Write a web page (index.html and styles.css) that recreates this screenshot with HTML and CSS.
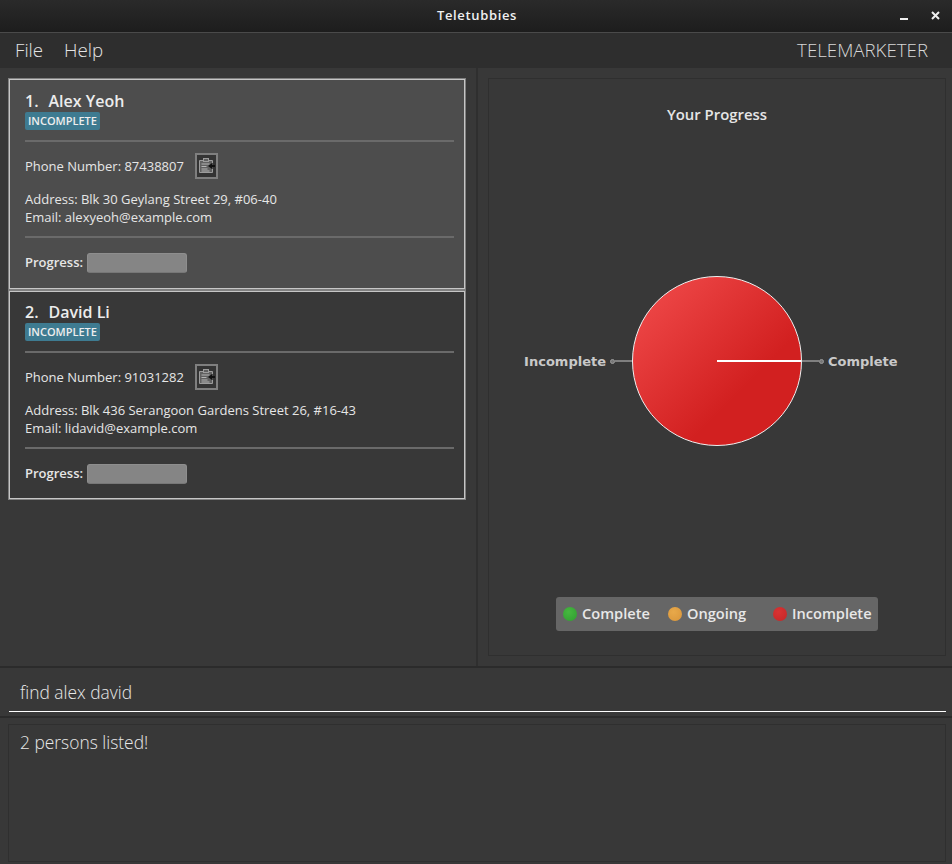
FILE: index.html
```html
<!DOCTYPE html>
<html lang="en">
<head>
    <meta charset="UTF-8">
    <title>Teletubbies</title>
    <link rel="stylesheet" href="styles.css">
</head>
<body>
    <div class="titlebar">
        <span class="title">Teletubbies</span>
        <svg class="winbtns" width="42" height="12" viewBox="0 0 42 12">
            <rect x="1" y="9" width="8" height="2" fill="#eee"/>
            <path d="M33 3l7 7M40 3l-7 7" stroke="#eee" stroke-width="2"/>
        </svg>
    </div>
    <div class="menubar">
        <span class="menu">File</span>
        <span class="menu">Help</span>
        <span class="brand">TELEMARKETER</span>
    </div>
    <div class="main">
        <div class="left">
            <div class="card selected">
                <div class="name"><span class="num">1.</span>Alex Yeoh</div>
                <div class="tag">INCOMPLETE</div>
                <div class="rule"></div>
                <div class="phone">
                    <span>Phone Number: 87438807</span>
                    <span class="copy">
                        <svg width="17" height="18" viewBox="0 0 17 18" fill="none" stroke="#9c9c9c">
                            <path d="M14.5 6V3.5H1.5v12h13V12" fill="#606060"/>
                            <rect x="5.5" y="1.5" width="5" height="3" fill="#606060"/>
                            <path d="M3.5 7h8M3.5 9.5h5M3.5 12h6M3.5 14h8" stroke="#b4b4b4"/>
                            <path d="M17 9h-4" stroke="#111" stroke-width="2"/>
                            <path d="M14 6l-4 3 4 3z" fill="#111" stroke="none"/>
                        </svg>
                    </span>
                </div>
                <div class="line">Address: Blk 30 Geylang Street 29, #06-40</div>
                <div class="line">Email: alexyeoh@example.com</div>
                <div class="rule rule2"></div>
                <div class="progress"><b>Progress:</b><span class="bar"></span></div>
            </div>
            <div class="card">
                <div class="name"><span class="num">2.</span>David Li</div>
                <div class="tag">INCOMPLETE</div>
                <div class="rule"></div>
                <div class="phone">
                    <span>Phone Number: 91031282</span>
                    <span class="copy">
                        <svg width="17" height="18" viewBox="0 0 17 18" fill="none" stroke="#9c9c9c">
                            <path d="M14.5 6V3.5H1.5v12h13V12" fill="#606060"/>
                            <rect x="5.5" y="1.5" width="5" height="3" fill="#606060"/>
                            <path d="M3.5 7h8M3.5 9.5h5M3.5 12h6M3.5 14h8" stroke="#b4b4b4"/>
                            <path d="M17 9h-4" stroke="#111" stroke-width="2"/>
                            <path d="M14 6l-4 3 4 3z" fill="#111" stroke="none"/>
                        </svg>
                    </span>
                </div>
                <div class="line">Address: Blk 436 Serangoon Gardens Street 26, #16-43</div>
                <div class="line">Email: lidavid@example.com</div>
                <div class="rule rule2"></div>
                <div class="progress"><b>Progress:</b><span class="bar"></span></div>
            </div>
        </div>
        <div class="right">
            <div class="chartbox">
                <div class="charttitle">Your Progress</div>
                <div class="chart">
                    <div class="pielabel pielabel-left">
                        <span class="lbl">Incomplete</span>
                        <span class="dot"></span>
                        <span class="lead"></span>
                    </div>
                    <div class="pie"><span class="needle"></span></div>
                    <div class="pielabel">
                        <span class="lead"></span>
                        <span class="dot"></span>
                        <span class="lbl">Complete</span>
                    </div>
                </div>
                <div class="legend">
                    <span class="key key1"><i class="ball green"></i><span>Complete</span></span>
                    <span class="key key2"><i class="ball orange"></i><span>Ongoing</span></span>
                    <span class="key"><i class="ball red"></i><span>Incomplete</span></span>
                </div>
            </div>
        </div>
    </div>
    <div class="command">
        <div class="input">find alex david</div>
    </div>
    <div class="result">
        <div class="resultbox">2 persons listed!</div>
    </div>
</body>
</html>
```

FILE: styles.css
```css
*{
    padding: 0;
    margin: 0;
    box-sizing: border-box;
}
html, body{
    width: 952px;
    height: 864px;
    overflow: hidden;
}
body{
    background: #383838;
    color: #e6e6e6;
    font-family: "Open Sans", "Liberation Sans", sans-serif;
    display: flex;
    flex-direction: column;
}
.titlebar{
    height: 33px;
    padding-bottom: 2px;
    background: linear-gradient(#2a2a2a, #1d1d1d);
    border-bottom: 1px solid #4a4a4a;
    display: flex;
    align-items: center;
    justify-content: center;
    position: relative;
}
.title{
    font-size: 13px;
    font-weight: 600;
    color: #f0f0f0;
    letter-spacing: 0.65px;
    margin-left: 2px;
}
.winbtns{
    position: absolute;
    right: 11px;
    top: 9px;
}
.menubar{
    height: 35px;
    padding: 0 24px 2px 15px;
    background: #2e2e2e;
    display: flex;
    align-items: center;
}
.menu{
    font-size: 18.7px;
    font-weight: 300;
    color: #e4e4e4;
    margin-right: 21px;
}
.brand{
    margin-left: auto;
    font-size: 18.7px;
    font-weight: 300;
    color: #d8d8d8;
}
.main{
    height: 600px;
    display: flex;
    border-bottom: 2px solid #2b2b2b;
}
.left{
    width: 478px;
    padding: 10px 12px 0 8px;
    border-right: 2px solid #2f2f2f;
}
.card{
    width: 458px;
    height: 210px;
    border: 1px solid #808080;
    box-shadow: inset 0 0 0 1px #c6c6c6;
    padding: 11px 11px 0 16px;
}
.card.selected{
    height: 212px;
    padding-top: 12px;
    background: #4d4d4d;
}
.name{
    font-size: 16px;
    font-weight: 600;
    line-height: 21px;
    color: #ececec;
}
.num{
    margin-right: 10px;
}
.tag{
    width: fit-content;
    background: #3e7b91;
    color: #eee;
    font-size: 11px;
    font-weight: 600;
    line-height: 18px;
    padding: 0 3px;
    border-radius: 2px;
}
.rule{
    height: 2px;
    background: #6a6a6a;
    margin-top: 10px;
}
.rule2{
    margin-top: 10px;
}
.phone{
    display: flex;
    align-items: center;
    gap: 11px;
    font-size: 13px;
    line-height: 26px;
    margin: 11px 0 11px;
}
.copy{
    width: 23px;
    height: 26px;
    border: 2px solid #7f7f7f;
    background: #343434;
    display: flex;
    align-items: center;
    justify-content: center;
}
.line{
    font-size: 13px;
    line-height: 18px;
}
.progress{
    display: flex;
    align-items: center;
    gap: 4px;
    font-size: 13px;
    margin-top: 15px;
}
.progress b{
    font-weight: 600;
    margin-top: -2px;
}
.bar{
    width: 100px;
    height: 20px;
    background: #858585;
    border: 1px solid #8e8e8e;
    border-bottom-color: #777;
    border-radius: 3px;
}
.right{
    flex: 1;
    padding: 10px 6px 10px 10px;
}
.chartbox{
    height: 578px;
    border: 1px solid #2f2f2f;
    display: flex;
    flex-direction: column;
    align-items: center;
}
.charttitle{
    font-size: 14.9px;
    font-weight: 600;
    line-height: 20px;
    margin-top: 25px;
}
.chart{
    width: 100%;
    display: grid;
    grid-template-columns: 1fr auto 1fr;
    align-items: center;
    margin-top: 152px;
}
.pielabel{
    display: flex;
    align-items: center;
    font-family: "DejaVu Sans", sans-serif;
    font-weight: bold;
    font-size: 13px;
    color: #c9c9c9;
}
.pielabel-left{
    justify-content: flex-end;
}
.lead{
    width: 17px;
    height: 2px;
    background: #7f7f7f;
}
.dot{
    width: 5px;
    height: 5px;
    background: #777;
    border: 1px solid #9a9a9a;
    border-radius: 50%;
}
.lbl{
    margin: 0 4px;
}
.pie{
    width: 170px;
    height: 170px;
    border-radius: 50%;
    border: 1px solid #f0f0f0;
    background: linear-gradient(135deg, #f04a4a 5%, #d22020 66%);
    position: relative;
}
.needle{
    position: absolute;
    left: 84px;
    top: 83px;
    width: 84px;
    height: 2px;
    background: #fff;
}
.legend{
    margin-top: 151px;
    width: 322px;
    height: 34px;
    background: #666;
    border-radius: 3px;
    display: flex;
    align-items: center;
    padding-left: 7px;
    font-size: 14.6px;
    font-weight: 600;
    color: #e8e8e8;
}
.key{
    display: flex;
    align-items: center;
    gap: 5px;
}
.key span{
    margin-top: -2px;
}
.key1{
    width: 105px;
}
.key2{
    width: 105px;
}
.ball{
    width: 14px;
    height: 14px;
    border-radius: 50%;
}
.green{
    background: radial-gradient(circle at 40% 35%, #46b83f, #2f9d30);
}
.orange{
    background: radial-gradient(circle at 40% 35%, #e8a94a, #d9953a);
}
.red{
    background: radial-gradient(circle at 40% 35%, #d93333, #c42626);
}
.command{
    height: 50px;
    padding: 0 6px 0 9px;
    border-bottom: 2px solid #2b2b2b;
}
.input{
    height: 44px;
    border-bottom: 1px solid #fff;
    padding: 12px 0 0 11px;
    font-size: 17.4px;
    font-weight: 300;
    line-height: 24px;
    color: #e8e8e8;
}
.result{
    flex: 1;
    padding: 6px 6px 0 8px;
}
.resultbox{
    height: 138px;
    border: 1px solid #2f2f2f;
    padding: 5px 11px;
    font-size: 17.4px;
    font-weight: 300;
    line-height: 24px;
    color: #e8e8e8;
}
```
